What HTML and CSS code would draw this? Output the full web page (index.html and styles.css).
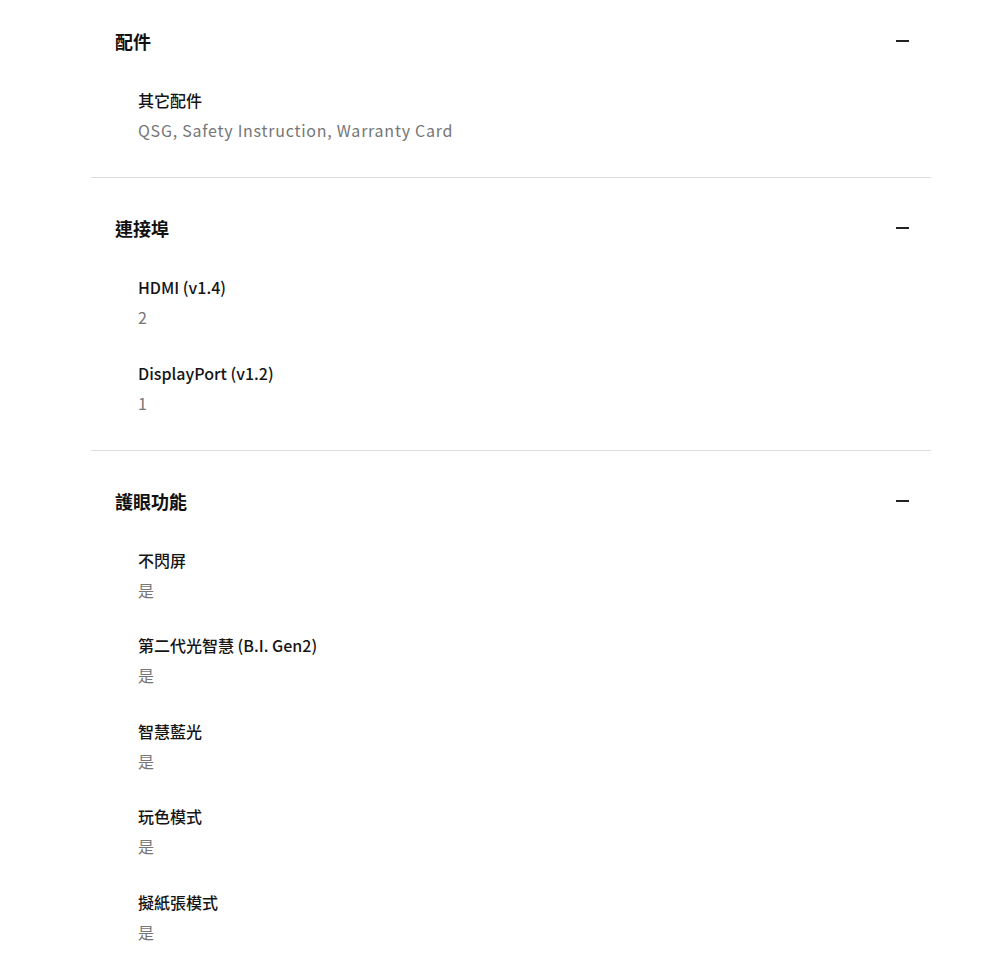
FILE: index.html
```html
<!DOCTYPE html>
<html lang="zh-Hant">
<head>
<meta charset="utf-8">
<title>規格</title>
<link rel="stylesheet" href="styles.css">
</head>
<body>
<div class="specs">
  <section class="spec-group">
    <div class="spec-head">
      <h3 class="spec-title">配件</h3>
      <span class="toggle" aria-hidden="true"></span>
    </div>
    <dl class="spec-list">
      <div class="spec-item">
        <dt>其它配件</dt>
        <dd>QSG, Safety Instruction, Warranty Card</dd>
      </div>
    </dl>
  </section>
  <section class="spec-group">
    <div class="spec-head">
      <h3 class="spec-title">連接埠</h3>
      <span class="toggle" aria-hidden="true"></span>
    </div>
    <dl class="spec-list">
      <div class="spec-item">
        <dt>HDMI (v1.4)</dt>
        <dd>2</dd>
      </div>
      <div class="spec-item">
        <dt>DisplayPort (v1.2)</dt>
        <dd>1</dd>
      </div>
    </dl>
  </section>
  <section class="spec-group">
    <div class="spec-head">
      <h3 class="spec-title">護眼功能</h3>
      <span class="toggle" aria-hidden="true"></span>
    </div>
    <dl class="spec-list">
      <div class="spec-item">
        <dt>不閃屏</dt>
        <dd>是</dd>
      </div>
      <div class="spec-item">
        <dt>第二代光智慧 (B.I. Gen2)</dt>
        <dd>是</dd>
      </div>
      <div class="spec-item">
        <dt>智慧藍光</dt>
        <dd>是</dd>
      </div>
      <div class="spec-item">
        <dt>玩色模式</dt>
        <dd>是</dd>
      </div>
      <div class="spec-item">
        <dt>擬紙張模式</dt>
        <dd>是</dd>
      </div>
    </dl>
  </section>
</div>
</body>
</html>
```

FILE: styles.css
```css
html, body {
  margin: 0;
  padding: 0;
  background: #ffffff;
}

body {
  font-family: "Noto Sans CJK TC", "Noto Sans", sans-serif;
  color: #111111;
}

.specs {
  width: 840px;
  margin-left: 91px;
}

.spec-group {
  padding: 35px 22px 32px 24px;
  border-bottom: 1px solid #dedede;
}

.spec-group:first-child {
  padding-top: 26px;
}

.spec-head {
  display: flex;
  align-items: center;
  justify-content: space-between;
  height: 30px;
}

.spec-title {
  margin: 0;
  font-size: 18px;
  line-height: 30px;
  font-weight: 700;
  color: #111111;
}

.toggle {
  display: block;
  width: 13px;
  height: 2px;
  background: #222222;
}

.spec-list {
  margin: 29px 0 0 23px;
  padding: 0;
  display: flex;
  flex-direction: column;
  gap: 25.5px;
}

.spec-item dt {
  margin: 0;
  font-size: 16px;
  line-height: 30px;
  font-weight: 500;
  color: #151515;
}

.spec-item dd {
  margin: 0;
  font-size: 16px;
  line-height: 30px;
  font-weight: 400;
  letter-spacing: 0.75px;
  color: #767676;
}
```
